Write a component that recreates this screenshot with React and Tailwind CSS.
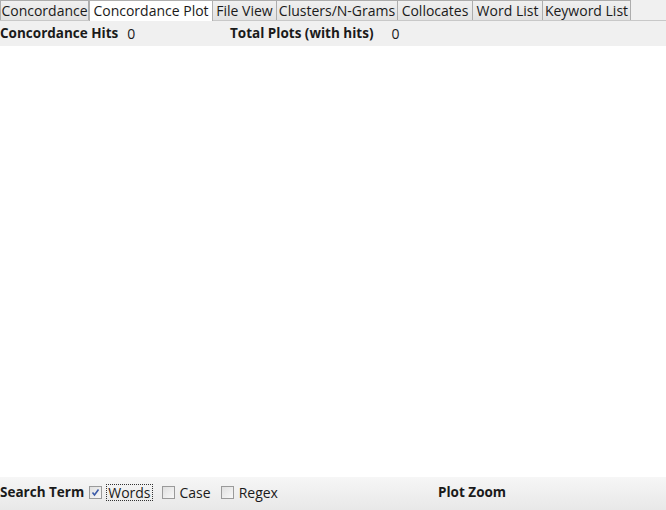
export default function App() {
  const tabs = [
    { label: "Concordance", w: 89 },
    { label: "Concordance Plot", w: 124, active: true },
    { label: "File View", w: 65 },
    { label: "Clusters/N-Grams", w: 122 },
    { label: "Collocates", w: 76 },
    { label: "Word List", w: 71 },
    { label: "Keyword List", w: 89 },
  ];
  const Box = ({ checked }) => (
    <span className="inline-flex h-[13px] w-[13px] items-center justify-center border border-[#9a9a9a] bg-gradient-to-br from-[#e0e0e0] to-[#f8f8f8]">
      {checked && (
        <svg width="9" height="9" viewBox="0 0 9 9">
          <path d="M1.5 4.5 L3.5 7 L7.5 1.5" fill="none" stroke="#3b5aa8" strokeWidth="1.6" />
        </svg>
      )}
    </span>
  );
  return (
    <div
      className="flex h-[510px] w-[666px] flex-col overflow-hidden bg-white text-[14px] text-[#1a1a1a]"
      style={{ fontFamily: '"Open Sans", "Noto Sans", sans-serif' }}
    >
      <div className="flex h-[21px] items-end border-b border-[#c8c8c8] bg-[#f0f0f0]">
        {tabs.map((t) =>
          t.active ? (
            <div
              key={t.label}
              style={{ width: t.w }}
              className="relative -mb-px flex h-[21px] items-center justify-center overflow-hidden whitespace-nowrap border-x border-t border-[#b0b0b0] bg-white leading-none"
            >
              {t.label}
            </div>
          ) : (
            <div
              key={t.label}
              style={{ width: t.w }}
              className="-ml-px flex h-[20px] items-center justify-center overflow-hidden whitespace-nowrap border border-b-0 border-[#adadad] bg-gradient-to-b from-[#f0f0f0] to-[#e2e2e2] leading-none first:ml-0"
            >
              {t.label}
            </div>
          )
        )}
      </div>
      <div className="flex h-[25px] items-center whitespace-nowrap bg-[#f0f0f0]">
        <div className="flex w-[230px] shrink-0 items-center">
          <span className="text-[13.5px] font-bold">Concordance Hits</span>
          <span className="ml-[9px]">0</span>
        </div>
        <span className="text-[13.5px] font-bold">Total Plots (with hits)</span>
        <span className="ml-[18px]">0</span>
      </div>
      <div className="flex-1 bg-white" />
      <div className="flex h-[33px] items-center whitespace-nowrap bg-gradient-to-b from-[#f6f6f6] to-[#e8e8e8] pb-[2px]">
        <div className="flex w-[438px] shrink-0 items-center">
          <span className="text-[13.5px] font-bold">Search Term</span>
          <span className="ml-[5px] flex"><Box checked /></span>
          <span className="ml-[4px] border border-dotted border-[#333] px-px leading-[15px]">Words</span>
          <span className="ml-[9px] flex"><Box /></span>
          <span className="ml-[5px]">Case</span>
          <span className="ml-[10px] flex"><Box /></span>
          <span className="ml-[5px]">Regex</span>
        </div>
        <span className="text-[13.5px] font-bold">Plot Zoom</span>
      </div>
    </div>
  );
}
